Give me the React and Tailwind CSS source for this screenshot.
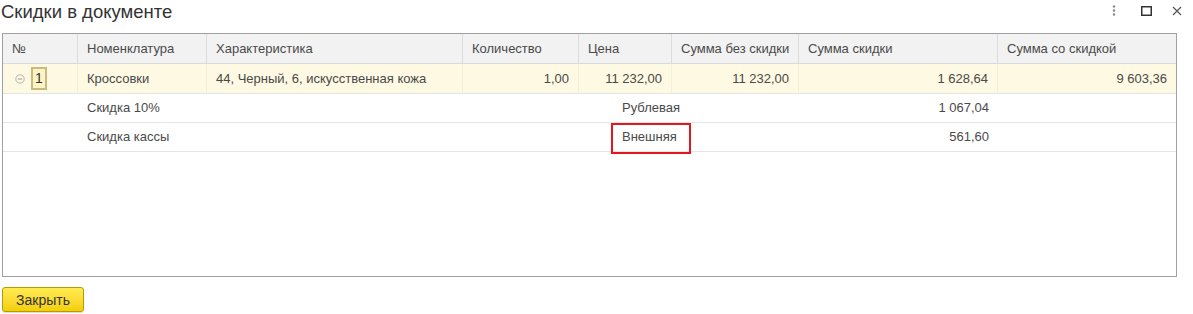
import React from 'react';

const cols = [
  { key: 'n', title: '№', w: 'w-[75px]' },
  { key: 'name', title: 'Номенклатура', w: 'w-[129px]' },
  { key: 'ch', title: 'Характеристика', w: 'w-[256px]' },
  { key: 'qty', title: 'Количество', w: 'w-[116px]' },
  { key: 'price', title: 'Цена', w: 'w-[93px]' },
  { key: 'sum', title: 'Сумма без скидки', w: 'w-[127px]' },
  { key: 'disc', title: 'Сумма скидки', w: 'w-[199px]' },
  { key: 'total', title: 'Сумма со скидкой', w: 'w-[178px]' },
];

const subRows = [
  { name: 'Скидка 10%', type: 'Рублевая', disc: '1 067,04' },
  { name: 'Скидка кассы', type: 'Внешняя', disc: '561,60', marked: true },
];

export default function App() {
  return (
    <div className="w-[1193px] h-[314px] bg-white text-[13px] text-[#4a4a4a] overflow-hidden" style={{ fontFamily: '"Liberation Sans", Arial, sans-serif' }}>
      {/* Title bar */}
      <div className="flex items-start h-[33px]">
        <h1 className="text-[18.5px] leading-[22px] text-[#333] pl-[1px] pt-[1px] flex-1">Скидки в документе</h1>
        <div className="flex items-center pt-[5px] pr-[11px]">
          <svg width="4" height="11" viewBox="0 0 4 11" className="mr-[25px]">
            <circle cx="2" cy="1.5" r="1.2" fill="#8a8a8a" />
            <circle cx="2" cy="5.5" r="1.2" fill="#8a8a8a" />
            <circle cx="2" cy="9.5" r="1.2" fill="#8a8a8a" />
          </svg>
          <svg width="11" height="10" viewBox="0 0 11 10" className="mr-[20px]">
            <rect x="0.75" y="0.75" width="9.5" height="8.5" fill="none" stroke="#333" strokeWidth="1.5" />
          </svg>
          <svg width="10" height="10" viewBox="0 0 10 10">
            <path d="M1 1L9 9M9 1L1 9" stroke="#555" strokeWidth="1.2" />
          </svg>
        </div>
      </div>

      {/* Table */}
      <div className="ml-[2px] w-[1175px] h-[244px] border border-[#a0a0a0]">
        {/* Header */}
        <div className="flex h-[30px] bg-[#f2f2f2] border-b border-[#dadada]">
          {cols.map((c, i) => (
            <div
              key={c.key}
              className={`${c.w} shrink-0 flex items-center pl-[9px] ${i < cols.length - 1 ? 'border-r border-[#dcdcdc]' : ''}`}
            >
              {c.title}
            </div>
          ))}
        </div>

        {/* Main row */}
        <div className="flex h-[30px] bg-[#fdf9e3] border-b border-[#e4e4e4]">
          <div className="w-[75px] shrink-0 flex items-center pl-[12px] border-r border-[#f3efd8]">
            <svg width="10" height="10" viewBox="0 0 10 10" className="mr-[6px]">
              <circle cx="5" cy="5" r="4.2" fill="none" stroke="#b4b4b4" strokeWidth="1" />
              <path d="M2.8 5H7.2" stroke="#9a9a9a" strokeWidth="1" />
            </svg>
            <span className="w-[16px] h-[23px] flex items-center justify-center border-2 border-[#c8bb82] bg-[#fdf3c4] text-[#333] text-[14px]">1</span>
          </div>
          <div className="w-[129px] shrink-0 flex items-center pl-[9px] border-r border-[#f3efd8]">Кроссовки</div>
          <div className="w-[256px] shrink-0 flex items-center pl-[9px] border-r border-[#f3efd8]">44, Черный, 6, искусственная кожа</div>
          <div className="w-[116px] shrink-0 flex items-center justify-end pr-[9px] border-r border-[#f3efd8]">1,00</div>
          <div className="w-[93px] shrink-0 flex items-center justify-end pr-[9px] border-r border-[#f3efd8]">11 232,00</div>
          <div className="w-[127px] shrink-0 flex items-center justify-end pr-[9px] border-r border-[#f3efd8]">11 232,00</div>
          <div className="w-[199px] shrink-0 flex items-center justify-end pr-[9px] border-r border-[#f3efd8]">1 628,64</div>
          <div className="w-[178px] shrink-0 flex items-center justify-end pr-[9px]">9 603,36</div>
        </div>

        {/* Discount rows */}
        {subRows.map((r) => (
          <div key={r.name} className="flex h-[29px] border-b border-[#e4e4e4]">
            <div className="w-[75px] shrink-0" />
            <div className="w-[129px] shrink-0 flex items-center pl-[9px]">{r.name}</div>
            <div className="w-[256px] shrink-0" />
            <div className="w-[116px] shrink-0" />
            <div className="w-[93px] shrink-0 relative flex items-center pl-[43px] whitespace-nowrap">
              {r.type}
              {r.marked && (
                <span className="absolute left-[32px] top-0 w-[80px] h-[31px] border-2 border-[#e3171f]" />
              )}
            </div>
            <div className="w-[127px] shrink-0" />
            <div className="w-[199px] shrink-0 flex items-center justify-end pr-[9px]">{r.disc}</div>
            <div className="w-[178px] shrink-0" />
          </div>
        ))}
      </div>

      {/* Footer */}
      <div className="pt-[10px] pl-[2px]">
        <button className="w-[82px] h-[25px] rounded-[3px] border border-[#b39b00] bg-gradient-to-b from-[#ffeb4f] to-[#f4cf00] text-[#333] text-[14px] leading-none shadow-[0_1px_1px_rgba(0,0,0,0.15)]">
          Закрыть
        </button>
      </div>
    </div>
  );
}
